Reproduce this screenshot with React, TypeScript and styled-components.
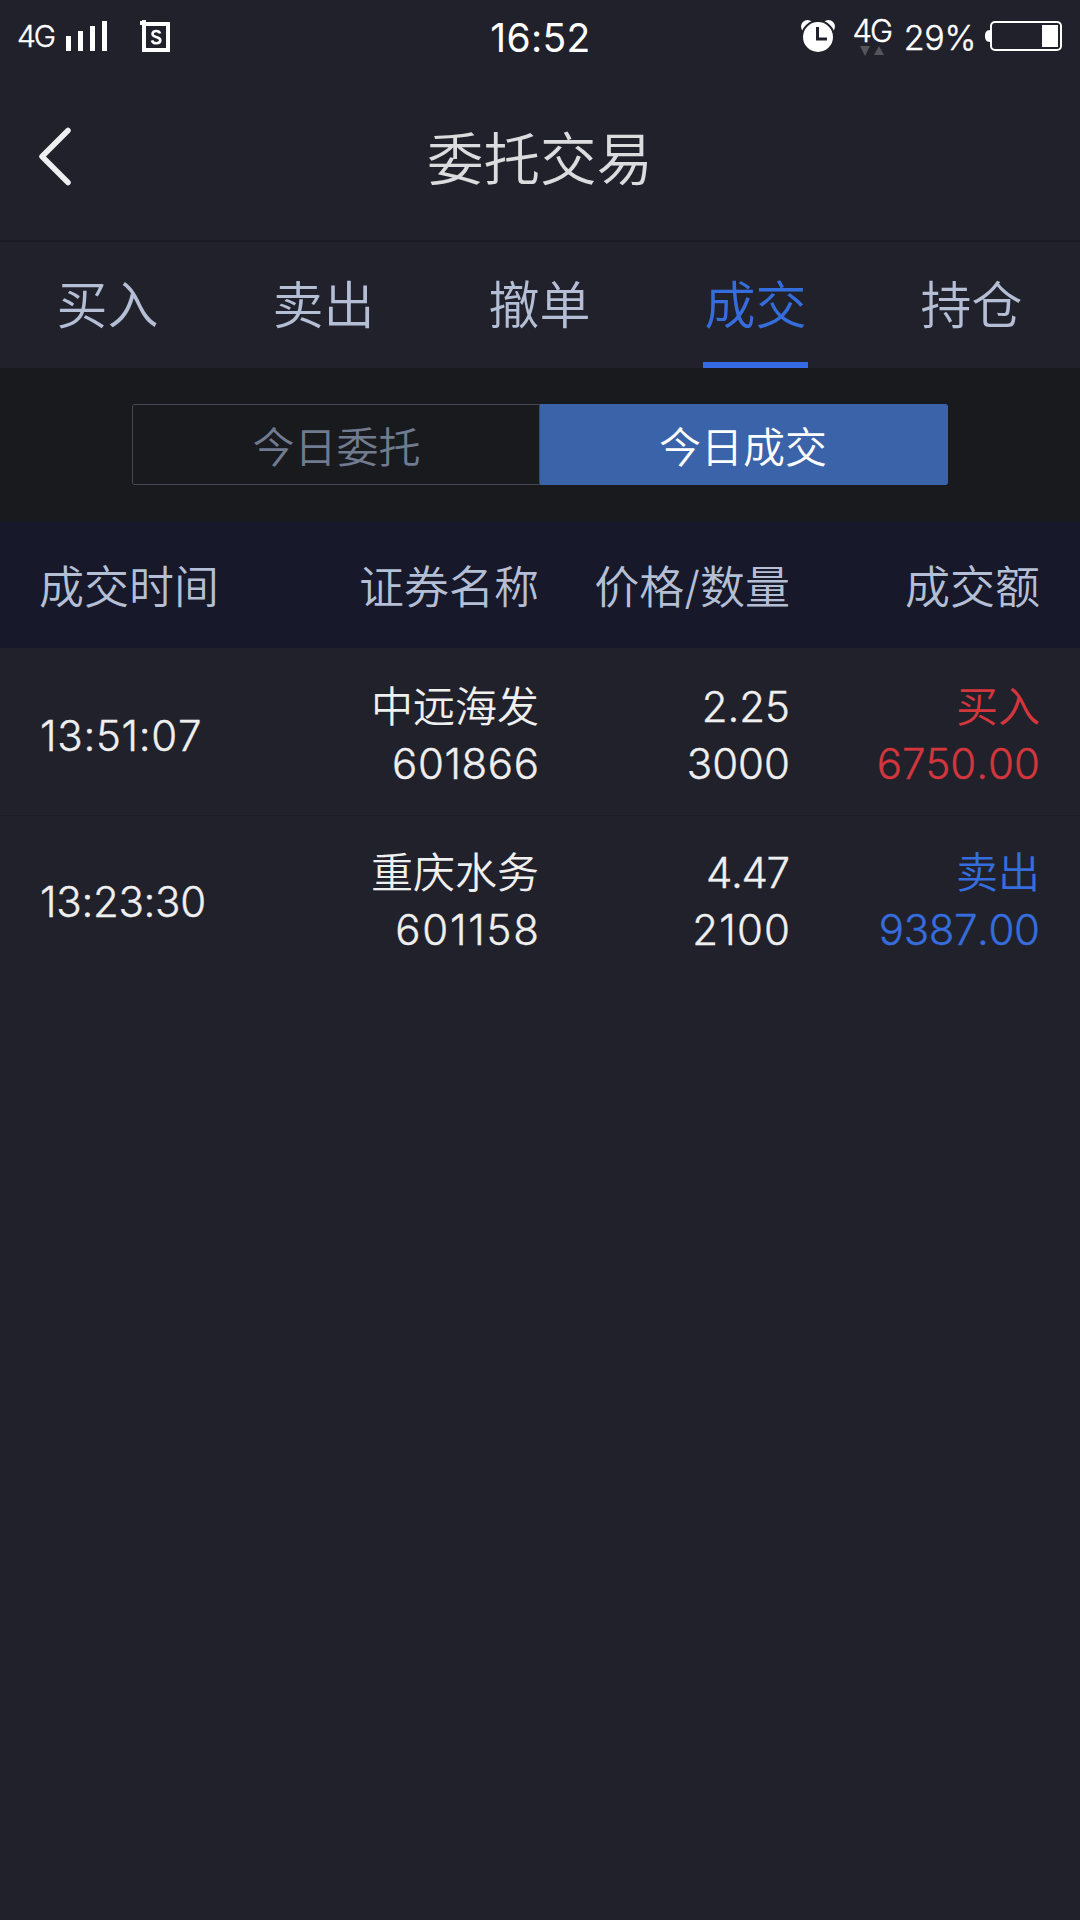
import React from "react";
import styled, { createGlobalStyle } from "styled-components";

const GlobalStyle = createGlobalStyle`
  * { box-sizing: border-box; }
  body {
    margin: 0;
    background: #21212b;
    font-family: Inter, "Noto Sans CJK SC", sans-serif;
    font-weight: 350;
    font-kerning: none;
  }
  button { font: inherit; border: 0; padding: 0; background: none; color: inherit; }
`;

const Screen = styled.div`
  width: 1080px;
  height: 1920px;
  overflow: hidden;
  display: flex;
  flex-direction: column;
  background: #21212b;
  white-space: nowrap;
`;

const StatusBar = styled.div`
  height: 72px;
  flex: none;
  display: grid;
  grid-template-columns: 1fr auto 1fr;
  padding: 0 18px 0 17px;
  color: #fff;
`;

const StatusGroup = styled.div<{ $end?: boolean }>`
  display: flex;
  align-items: flex-start;
  justify-content: ${(p) => (p.$end ? "flex-end" : "flex-start")};
`;

const StatusText = styled.span<{ $size: number; $top: number; $gap?: number; $tight?: number; $bold?: boolean }>`
  font-size: ${(p) => p.$size}px;
  line-height: 40px;
  font-weight: ${(p) => (p.$bold ? 400 : 350)};
  -webkit-text-stroke: ${(p) => (p.$bold ? 0 : 0.4)}px currentColor;
  letter-spacing: ${(p) => p.$tight ?? 0}px;
  margin-top: ${(p) => p.$top}px;
  margin-right: ${(p) => p.$gap ?? 0}px;
`;

const StatusIcon = styled.svg<{ $gap?: number }>`
  display: block;
  flex: none;
  margin-right: ${(p) => p.$gap ?? 0}px;
`;

const CarrierText = styled(StatusText)`
  width: 48px;
`;

const ClockText = styled(StatusText)`
  padding-left: 2px;
`;

const Network = styled.div`
  display: flex;
  flex-direction: column;
  align-items: center;
  width: 40px;
  margin-right: 12px;
`;

const DataArrows = styled.svg`
  display: block;
  margin-top: -5px;
  margin-left: 1px;
`;

const TitleBar = styled.header`
  height: 170px;
  flex: none;
  display: grid;
  grid-template-columns: 110px 1fr 110px;
  align-items: center;
  border-bottom: 2px solid #1a1a22;
`;

const BackButton = styled.button`
  display: flex;
  padding-left: 38px;
`;

const Title = styled.h1`
  margin: 0;
  padding-top: 8px;
  text-align: center;
  font-size: 56.5px;
  line-height: 80px;
  font-weight: 350;
  color: #dcdcde;
`;

const Tabs = styled.nav`
  height: 126px;
  flex: none;
  display: grid;
  grid-template-columns: repeat(5, 1fr);
  justify-items: center;
`;

const Tab = styled.button<{ $active: boolean }>`
  width: 105px;
  height: 126px;
  margin-right: 1px;
  padding-top: 7px;
  padding-bottom: ${(p) => (p.$active ? 0 : 6)}px;
  border-bottom: ${(p) => (p.$active ? "6px solid #356ae6" : "0")};
  color: ${(p) => (p.$active ? "#366ddc" : "#b4bfd6")};
  font-size: 51px;
  line-height: 113px;
  text-align: center;
`;

const SegmentBar = styled.div`
  height: 154px;
  flex: none;
  padding: 36px 132px 0;
  background: #191a1e;
`;

const Segments = styled.div`
  display: grid;
  grid-template-columns: 1fr 1fr;
  height: 81px;
  border-radius: 2px;
  overflow: hidden;
`;

const Segment = styled.button<{ $active: boolean }>`
  height: 81px;
  padding: ${(p) => (p.$active ? "0 2px 0 0" : "0 0 0 1px")};
  font-size: 42px;
  border: ${(p) => (p.$active ? "0" : "1px solid #464752")};
  color: ${(p) => (p.$active ? "#fff" : "#717b90")};
  background: ${(p) => (p.$active ? "#3a63aa" : "transparent")};
  border-radius: ${(p) => (p.$active ? "0 2px 2px 0" : "2px 0 0 2px")};
`;

const columns = "250px 250px 251px 250px";

const TableHead = styled.div`
  height: 126px;
  flex: none;
  display: grid;
  grid-template-columns: ${columns};
  align-items: center;
  padding: 0 39px 1px;
  background: #171829;
  color: #b4bfd6;
  font-size: 45px;
`;

const HeadCell = styled.div<{ $left?: boolean }>`
  display: flex;
  justify-content: ${(p) => (p.$left ? "flex-start" : "flex-end")};
`;

const Trades = styled.section`
  display: flex;
  flex-direction: column;
  padding-top: 1px;
`;

const Row = styled.div`
  height: 166px;
  display: grid;
  grid-template-columns: ${columns};
  align-items: center;
  padding: 5px 39px 0;
  color: #efefef;
  font-size: 42px;

  & + & {
    border-top: 1px solid #1a1a22;
    padding-top: 4px;
  }
`;

const Time = styled.div`
  padding: 2px 0 0 1px;
`;

const Figure = styled.span<{ $tracking?: number }>`
  letter-spacing: ${(p) => p.$tracking ?? 0}px;
  margin-right: ${(p) => -(p.$tracking ?? 0)}px;
  -webkit-text-stroke: 0.4px currentColor;
`;

const Pair = styled.div<{ $color?: string }>`
  display: flex;
  flex-direction: column;
  align-items: flex-end;
  color: ${(p) => p.$color ?? "inherit"};
  line-height: 57px;
`;

const tabs = ["买入", "卖出", "撤单", "成交", "持仓"];

type Value = { text: string; tracking?: number };

type Trade = {
  time: Value;
  name: string;
  code: Value;
  price: Value;
  qty: Value;
  side: string;
  total: Value;
  color: string;
};

const trades: Trade[] = [
  {
    time: { text: "13:51:07", tracking: 0.7 },
    name: "中远海发",
    code: { text: "601866", tracking: 0.6 },
    price: { text: "2.25" },
    qty: { text: "3000" },
    side: "买入",
    total: { text: "6750.00" },
    color: "#d3363d",
  },
  {
    time: { text: "13:23:30", tracking: -0.3 },
    name: "重庆水务",
    code: { text: "601158", tracking: 1.8 },
    price: { text: "4.47", tracking: -1.4 },
    qty: { text: "2100", tracking: 1.2 },
    side: "卖出",
    total: { text: "9387.00", tracking: -0.4 },
    color: "#366ddc",
  },
];

const Num = ({ value }: { value: Value }) => <Figure $tracking={value.tracking}>{value.text}</Figure>;

export default function App() {
  return (
    <Screen>
      <GlobalStyle />
      <StatusBar>
        <StatusGroup>
          <CarrierText $size={30} $top={16} $tight={-2}>4G</CarrierText>
          <StatusIcon width="44" height="72" $gap={31} fill="#fff">
            <rect x="1" y="36" width="5" height="15" />
            <rect x="13" y="31" width="5" height="20" />
            <rect x="25" y="26" width="5" height="25" />
            <rect x="37" y="21" width="5" height="30" />
          </StatusIcon>
          <StatusIcon width="32" height="72" fill="none" stroke="#fff">
            <rect x="4" y="24" width="24" height="26" strokeWidth="4" />
            <path d="M0 23h6M4 20v6" strokeWidth="4" />
            <path d="M20 33.500C19.500 31.700 18 31 16.200 31C14 31 12.500 32.200 12.500 34C12.500 38 20.300 35.800 20.300 40.200C20.300 42.200 18.500 43.300 16.300 43.300C13.800 43.300 12.500 42.200 12 40.300" strokeWidth="2.600" />
          </StatusIcon>
        </StatusGroup>
        <ClockText $size={39} $top={18} $tight={0.3} $bold>16:52</ClockText>
        <StatusGroup $end>
          <StatusIcon width="36" height="72" $gap={16}>
            <g fill="#fff">
              <circle cx="7.500" cy="26.500" r="6.500" />
              <circle cx="28.500" cy="26.500" r="6.500" />
            </g>
            <circle cx="18" cy="37" r="16" fill="#fff" stroke="#21212b" strokeWidth="2" />
            <path d="M17.500 27v12H27" fill="none" stroke="#21212b" strokeWidth="3" />
          </StatusIcon>
          <Network>
            <StatusText $size={31} $top={11} $tight={-2}>4G</StatusText>
            <DataArrows width="26" height="10" viewBox="0 0 26 10" fill="#53545c">
              <path d="M1 0h10L6 10zM15 9h10L20 0z" />
            </DataArrows>
          </Network>
          <StatusText $size={34} $top={18} $gap={9} $tight={-0.3}>29%</StatusText>
          <StatusIcon width="77" height="72">
            <path d="M5 30C1 30 0 33 0 36s1 6 5 6z" fill="#fff" />
            <rect x="6" y="22" width="70" height="28" rx="4" fill="none" stroke="#fff" strokeWidth="2" />
            <rect x="57" y="25" width="16" height="22" fill="#fff" />
          </StatusIcon>
        </StatusGroup>
      </StatusBar>

      <TitleBar>
        <BackButton aria-label="返回">
          <svg width="34" height="60" viewBox="0 0 34 60" fill="none" stroke="#efeff1" strokeWidth="5.500" strokeLinecap="round" strokeLinejoin="round">
            <path d="M30 4.500L4 30.500L30 56.500" />
          </svg>
        </BackButton>
        <Title>委托交易</Title>
      </TitleBar>

      <Tabs>
        {tabs.map((t) => (
          <Tab key={t} $active={t === "成交"}>{t}</Tab>
        ))}
      </Tabs>

      <SegmentBar>
        <Segments>
          <Segment $active={false}>今日委托</Segment>
          <Segment $active>今日成交</Segment>
        </Segments>
      </SegmentBar>

      <TableHead>
        <HeadCell $left>成交时间</HeadCell>
        <HeadCell>证券名称</HeadCell>
        <HeadCell>价格/数量</HeadCell>
        <HeadCell>成交额</HeadCell>
      </TableHead>

      <Trades>
        {trades.map((t) => (
          <Row key={t.time.text}>
            <Time><Num value={t.time} /></Time>
            <Pair><span>{t.name}</span><Num value={t.code} /></Pair>
            <Pair><Num value={t.price} /><Num value={t.qty} /></Pair>
            <Pair $color={t.color}><span>{t.side}</span><Num value={t.total} /></Pair>
          </Row>
        ))}
      </Trades>
    </Screen>
  );
}
